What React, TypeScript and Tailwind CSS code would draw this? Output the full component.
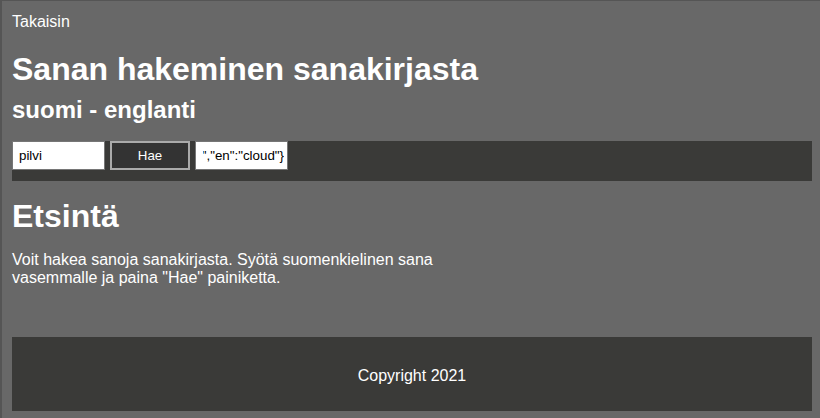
export default function App() {
  return (
    <div
      className="w-[820px] h-[418px] overflow-hidden bg-[#686868] border-l-2 border-t border-[#555555] text-white"
      style={{ fontFamily: '"Liberation Sans", Arial, sans-serif' }}
    >
      <div className="pl-[10px] pr-[8px] pt-[12px]">
        <a className="block text-[16px] leading-[18px]">Takaisin</a>
        <h1 className="mt-[20px] text-[32px] font-bold leading-[37px]">Sanan hakeminen sanakirjasta</h1>
        <h2 className="mt-[8px] text-[24px] font-bold leading-[28px]">suomi - englanti</h2>
        <div className="mt-[17px] h-[40px] bg-[#3a3a38] flex items-start gap-[5px]">
          <input
            className="w-[93px] h-[29px] bg-white text-black text-[13.33px] px-[6px] border border-[#767676] outline-none"
            defaultValue="pilvi"
          />
          <button className="w-[80px] h-[29px] bg-[#333333] text-white text-[13.33px] border-2 border-[#aaaaaa]">
            Hae
          </button>
          <input
            className="w-[93px] h-[29px] bg-white text-black text-[13.33px] pl-[7px] pr-[3px] border border-[#767676] outline-none text-right"
            defaultValue={'{"fi":"pilvi","en":"cloud"}'}
            dir="rtl"
          />
        </div>
        <h2 className="mt-[17px] text-[32px] font-bold leading-[37px]">Etsintä</h2>
        <p className="mt-[16px] w-[450px] text-[16px] leading-[18px]">
          Voit hakea sanoja sanakirjasta. Syötä suomenkielinen sana vasemmalle ja paina "Hae" painiketta.
        </p>
        <footer className="mt-[50px] h-[74px] pt-[3px] bg-[#3a3a38] flex items-center justify-center text-[16px]">
          Copyright 2021
        </footer>
      </div>
    </div>
  );
}
